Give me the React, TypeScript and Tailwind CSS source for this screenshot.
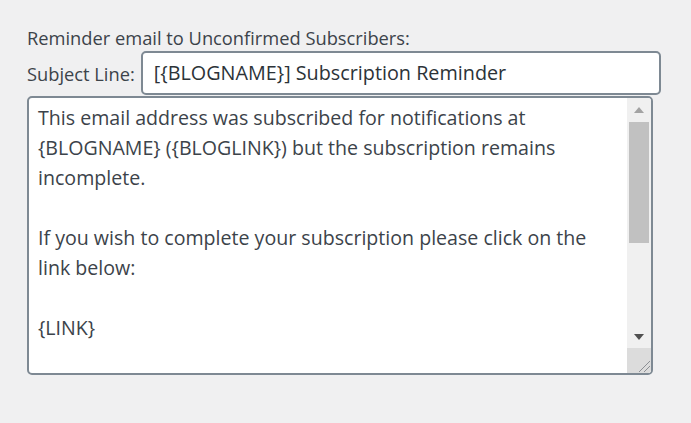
import React from "react";

export default function App() {
  const font = { fontFamily: '"Open Sans", "Noto Sans", sans-serif' };
  return (
    <div className="w-[691px] h-[423px] bg-[#f0f0f1] text-[#3c434a] pl-[27px] pt-[26px]" style={font}>
      <div className="text-[18.3px] leading-[24px] h-[25px]">Reminder email to Unconfirmed Subscribers:</div>
      <div className="flex items-center">
        <span className="text-[18.3px] leading-[24px] pt-[1px]">Subject Line:</span>
        <div className="ml-[6px] w-[520px] h-[44px] bg-white border-2 border-[#7e8993] rounded-[5px] flex items-center pl-[11px] text-[19.8px] text-[#2c3338]">
          [{"{"}BLOGNAME{"}"}] Subscription Reminder
        </div>
      </div>
      <div className="mt-[1px] w-[626px] h-[279px] bg-white border-2 border-[#7e8993] rounded-[5px] flex overflow-hidden">
        <div className="flex-1 pl-[9px] pt-[5px] pr-[10px] text-[19.6px] leading-[30px] whitespace-pre-wrap">
          {"This email address was subscribed for notifications at {BLOGNAME} ({BLOGLINK}) but the subscription remains incomplete.\n\nIf you wish to complete your subscription please click on the link below:\n\n{LINK}"}
        </div>
        <div className="w-[24px] flex flex-col bg-[#f0f0f0]">
          <div className="h-[24px] flex items-center justify-center">
            <svg width="10" height="6" viewBox="0 0 10 6"><polygon points="0,6 10,6 5,0" fill="#a3a3a3" /></svg>
          </div>
          <div className="mx-[2px] h-[121px] bg-[#c1c1c1]" />
          <div className="flex-1 flex items-end justify-center pb-[8px]">
            <svg width="10" height="6" viewBox="0 0 10 6"><polygon points="0,0 10,0 5,6" fill="#505050" /></svg>
          </div>
          <div className="h-[25px] bg-[#dcdcdc] relative">
            <svg className="absolute right-[1px] bottom-[1px]" width="14" height="14" viewBox="0 0 14 14">
              <line x1="3" y1="14" x2="14" y2="3" stroke="#8c8f94" strokeWidth="1" />
              <line x1="8" y1="14" x2="14" y2="8" stroke="#8c8f94" strokeWidth="1" />
            </svg>
          </div>
        </div>
      </div>
    </div>
  );
}
